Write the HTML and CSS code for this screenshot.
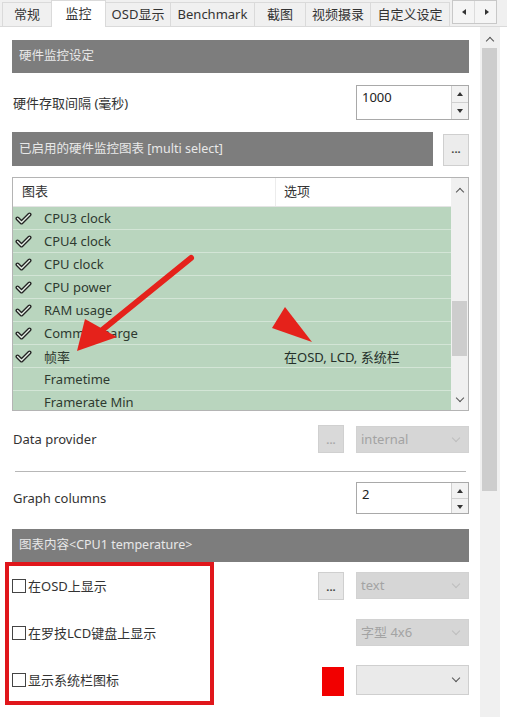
FILE: index.html
```html
<!DOCTYPE html>
<html lang="zh-CN">
<head>
    <meta charset="UTF-8">
    <title>监控设置</title>
    <link rel="stylesheet" href="styles.css">
</head>
<body>
<div class="tabs">
    <div class="tab t1">常规</div>
    <div class="tab t2 active">监控</div>
    <div class="tab t3">OSD显示</div>
    <div class="tab t4">Benchmark</div>
    <div class="tab t5">截图</div>
    <div class="tab t6">视频摄录</div>
    <div class="tab t7">自定义设定</div>
    <div class="tab-arrows">
        <span class="tri-left"></span>
        <span class="tri-right"></span>
    </div>
</div>

<div class="main">
    <div class="content">
        <div class="section-bar">硬件监控设定</div>

        <div class="row row-first">
            <span class="label">硬件存取间隔 (毫秒)</span>
            <div class="spinner">
                <span class="spin-value">1000</span>
                <div class="spin-btns">
                    <span class="spin-up"></span>
                    <span class="spin-down"></span>
                </div>
            </div>
        </div>

        <div class="bar-row">
            <div class="section-bar grow">已启用的硬件监控图表 [multi select]</div>
            <div class="dots-btn">...</div>
        </div>

        <!-- graph list -->
        <div class="listbox">
            <div class="list-main">
                <div class="list-head">
                    <span class="col-a">图表</span>
                    <span class="col-b">选项</span>
                </div>
                <div class="list-row"><span class="check"></span><span class="col-a">CPU3 clock</span></div>
                <div class="list-row"><span class="check"></span><span class="col-a">CPU4 clock</span></div>
                <div class="list-row"><span class="check"></span><span class="col-a">CPU clock</span></div>
                <div class="list-row"><span class="check"></span><span class="col-a">CPU power</span></div>
                <div class="list-row"><span class="check"></span><span class="col-a">RAM usage</span></div>
                <div class="list-row"><span class="check"></span><span class="col-a">Commit charge</span></div>
                <div class="list-row"><span class="check"></span><span class="col-a">帧率</span><span class="col-b">在OSD, LCD, 系统栏</span></div>
                <div class="list-row"><span class="nocheck"></span><span class="col-a">Frametime</span></div>
                <div class="list-row"><span class="nocheck"></span><span class="col-a">Framerate Min</span></div>
            </div>
            <div class="list-scroll">
                <span class="chev-up"></span>
                <div class="list-thumb"></div>
                <span class="chev-down"></span>
            </div>
        </div>

        <div class="row row-provider">
            <span class="label">Data provider</span>
            <div class="controls">
                <div class="dots-btn disabled">...</div>
                <div class="select disabled">internal<span class="chev"></span></div>
            </div>
        </div>

        <div class="divider"></div>

        <div class="row row-columns">
            <span class="label">Graph columns</span>
            <div class="spinner small">
                <span class="spin-value">2</span>
                <div class="spin-btns">
                    <span class="spin-up"></span>
                    <span class="spin-down"></span>
                </div>
            </div>
        </div>

        <div class="section-bar">图表内容&lt;CPU1 temperature&gt;</div>

        <div class="opt-row">
            <label class="opt"><span class="box"></span>在OSD上显示</label>
            <div class="controls">
                <div class="dots-btn light">...</div>
                <div class="select disabled">text<span class="chev"></span></div>
            </div>
        </div>
        <div class="opt-row">
            <label class="opt"><span class="box"></span>在罗技LCD键盘上显示</label>
            <div class="controls">
                <div class="select disabled">字型 4x6<span class="chev"></span></div>
            </div>
        </div>
        <div class="opt-row">
            <label class="opt"><span class="box"></span>显示系统栏图标</label>
            <div class="controls">
                <div class="swatch"></div>
                <div class="select plain"><span class="chev dark"></span></div>
            </div>
        </div>

        <!-- annotations drawn over the screenshot -->
        <svg class="marks" width="480" height="691" viewBox="0 26 480 691">
            <path d="M191 257 L101 330" stroke="#e5221b" stroke-width="6" stroke-linecap="round" fill="none"/>
            <polygon points="85,318 117,336 77,350" fill="#e5221b"/>
            <polygon points="285,306 272,327 312,341" fill="#e5221b"/>
        </svg>
        <div class="redbox"></div>
    </div>

    <div class="vscroll">
        <span class="chev-up"></span>
        <div class="vthumb"></div>
    </div>
</div>
</body>
</html>
```

FILE: styles.css
```css
body {
    margin: 0;
    padding: 0;
    width: 507px;
    height: 717px;
    overflow: hidden;
    background: #fff;
    color: #333;
    font-family: "Noto Sans", "Noto Sans CJK SC", sans-serif;
    font-size: 13px;
}

/* tab strip */
.tabs {
    display: flex;
    align-items: flex-end;
    height: 27px;
    background: #f0f0f0;
    border-bottom: 1px solid #dadada;
    box-sizing: border-box;
    padding-left: 2px;
}

.tab {
    height: 24px;
    line-height: 22px;
    box-sizing: border-box;
    text-align: center;
    border: 1px solid #dadada;
    border-bottom: none;
    margin-right: -1px;
    background: #f0f0f0;
    color: #333;
}

.tab.active {
    height: 27px;
    background: #fff;
    margin-bottom: -1px;
    line-height: 24px;
}

.t1 { width: 50px; }
.t2 { width: 55px; }
.t3 { width: 66px; }
.t4 { width: 85px; }
.t5 { width: 52px; }
.t6 { width: 66px; }
.t7 { width: 80px; }

.tab-arrows {
    display: flex;
    margin-left: 3px;
    margin-bottom: 2px;
    height: 22px;
    border: 1px solid #c8c8c8;
    background: #f5f5f5;
}

.tab-arrows span {
    width: 21px;
    position: relative;
}

.tab-arrows span + span {
    border-left: 1px solid #dcdcdc;
}

.tri-left::after, .tri-right::after {
    content: "";
    position: absolute;
    top: 8px;
    left: 8px;
    border: 3px solid transparent;
}

.tri-left::after {
    border-right: 4px solid #333;
    left: 6px;
}

.tri-right::after {
    border-left: 4px solid #333;
    left: 10px;
}

/* main area */
.main {
    display: flex;
    height: 690px;
}

.content {
    position: relative;
    width: 480px;
    box-sizing: border-box;
    padding: 13px 11px 0 12px;
}

.section-bar {
    height: 33px;
    line-height: 31px;
    background: #7d7d7d;
    color: #e8e8e8;
    padding-left: 7px;
    font-size: 12.5px;
}

.row {
    display: flex;
    justify-content: space-between;
    align-items: center;
}

.label {
    padding-left: 1px;
}

.row-first {
    margin: 12px 0 12px;
}

.spinner {
    display: flex;
    width: 113px;
    height: 35px;
    box-sizing: border-box;
    border: 1px solid #a9a9a9;
    background: #fff;
}

.spinner.small {
    height: 32px;
}

.spin-value {
    flex: 1;
    padding: 2px 0 0 5px;
    color: #222;
}

.spin-btns {
    width: 16px;
    display: flex;
    flex-direction: column;
    border-left: 1px solid #d0d0d0;
    background: #f2f2f2;
}

.spin-btns span {
    flex: 1;
    position: relative;
}

.spin-btns span + span {
    border-top: 1px solid #d0d0d0;
}

.spin-up::after, .spin-down::after {
    content: "";
    position: absolute;
    left: 5px;
    top: 6px;
    border: 3px solid transparent;
}

.spin-up::after {
    border-bottom: 4px solid #333;
    top: 3px;
}

.spin-down::after {
    border-top: 4px solid #333;
}

.bar-row {
    display: flex;
    align-items: flex-start;
    gap: 10px;
}

.grow {
    flex: 1;
    height: 34px;
    line-height: 33px;
}

.dots-btn {
    width: 26px;
    height: 32px;
    margin-top: 2px;
    box-sizing: border-box;
    border: 1px solid #cfcfcf;
    background: #ececec;
    text-align: center;
    line-height: 28px;
    color: #444;
    font-size: 11px;
    font-weight: bold;
}

/* list */
.listbox {
    display: flex;
    margin-top: 11px;
    height: 234px;
    box-sizing: border-box;
    border: 1px solid #b4b4b4;
    overflow: hidden;
}

.list-main {
    flex: 1;
}

.list-head {
    display: flex;
    height: 29px;
    line-height: 27px;
    background: #fff;
    border-bottom: 1px solid #e4e4e4;
    box-sizing: border-box;
}

.list-head .col-a {
    width: 253px;
    padding-left: 9px;
    border-right: 1px solid #ececec;
}

.list-head .col-b {
    padding-left: 8px;
}

.list-row {
    display: flex;
    align-items: center;
    height: 23px;
    box-sizing: border-box;
    background: #b9d5be;
    border-bottom: 1px solid #d3e5d6;
    color: #2e3a30;
}

.list-row .col-a {
    width: 240px;
    padding-left: 11px;
}

.list-row .col-b {
    color: #25302a;
}

.check, .nocheck {
    width: 19px;
    height: 14px;
    margin-left: 1px;
}

.check {
    background: no-repeat center / 17px 13px url("data:image/svg+xml,%3Csvg xmlns='http://www.w3.org/2000/svg' viewBox='0 0 17 13'%3E%3Cpath d='M2.5 6.5 L6.5 10.5 L14.5 2.5' fill='none' stroke='%23222' stroke-width='4' stroke-linecap='round' stroke-linejoin='round'/%3E%3Cpath d='M2.5 6.5 L6.5 10.5 L14.5 2.5' fill='none' stroke='%23e6f0e7' stroke-width='1.4' stroke-linecap='round' stroke-linejoin='round'/%3E%3C/svg%3E");
}

.list-scroll {
    width: 17px;
    display: flex;
    flex-direction: column;
    align-items: center;
    background: #f0f0f0;
    position: relative;
}

.list-thumb {
    position: absolute;
    left: 1px;
    top: 123px;
    width: 15px;
    height: 55px;
    background: #cdcdcd;
}

.chev-up, .chev-down {
    width: 5px;
    height: 5px;
    border-left: 1.6px solid #555;
    border-top: 1.6px solid #555;
}

.chev-up {
    transform: rotate(45deg);
    margin-top: 11px;
}

.chev-down {
    transform: rotate(225deg);
    margin-top: auto;
    margin-bottom: 9px;
}

/* form rows */
.controls {
    display: flex;
    align-items: center;
    gap: 12px;
}

.row-provider {
    margin-top: 13px;
    height: 30px;
}

.row-provider .dots-btn {
    margin-top: 0;
    height: 28px;
}

.dots-btn.disabled {
    background: #d9d9d9;
    border-color: #d0d0d0;
    color: #aaa;
}

.select {
    position: relative;
    width: 113px;
    height: 27px;
    box-sizing: border-box;
    padding-left: 4px;
    line-height: 25px;
    background: #fff;
    border: 1px solid #c4c4c4;
}

.select.disabled {
    background: #d6d6d6;
    border-color: #d2d2d2;
    color: #a3a3a3;
}

.select.plain {
    height: 30px;
    background: #eaeaea;
    border-color: #cfcfcf;
}

.chev {
    position: absolute;
    right: 9px;
    top: 8px;
    width: 5px;
    height: 5px;
    border-right: 1.3px solid #bdbdbd;
    border-bottom: 1.3px solid #bdbdbd;
    transform: rotate(45deg);
}

.chev.dark {
    border-color: #555;
    top: 9px;
}

.divider {
    height: 1px;
    background: #b7b7b7;
    margin: 17px 3px 10px 3px;
}

.row-columns {
    margin-bottom: 15px;
}

.opt-row {
    display: flex;
    justify-content: space-between;
    align-items: center;
    height: 47px;
}

.opt-row:first-of-type {
    margin-top: 3px;
}

.opt {
    display: flex;
    align-items: center;
    gap: 2px;
    color: #333;
}

.box {
    width: 12px;
    height: 12px;
    border: 1px solid #444;
    background: #fff;
}

.dots-btn.light {
    margin-top: 0;
    height: 28px;
    background: #e6e6e6;
}

.swatch {
    width: 22px;
    height: 29px;
    background: #f20000;
    margin-top: 4px;
}

/* annotations */
.marks {
    position: absolute;
    left: 0;
    top: 0;
    pointer-events: none;
}

.redbox {
    position: absolute;
    left: 5px;
    top: 535px;
    width: 209px;
    height: 143px;
    box-sizing: border-box;
    border: 4px solid #e0161b;
}

/* page scrollbar */
.vscroll {
    position: relative;
    width: 20px;
    background: #f0f0f0;
    display: flex;
    flex-direction: column;
    align-items: center;
}

.vscroll .chev-up {
    margin-top: 11px;
}

.vthumb {
    position: absolute;
    left: 2px;
    top: 21px;
    width: 15px;
    height: 443px;
    background: #cdcdcd;
}
```
